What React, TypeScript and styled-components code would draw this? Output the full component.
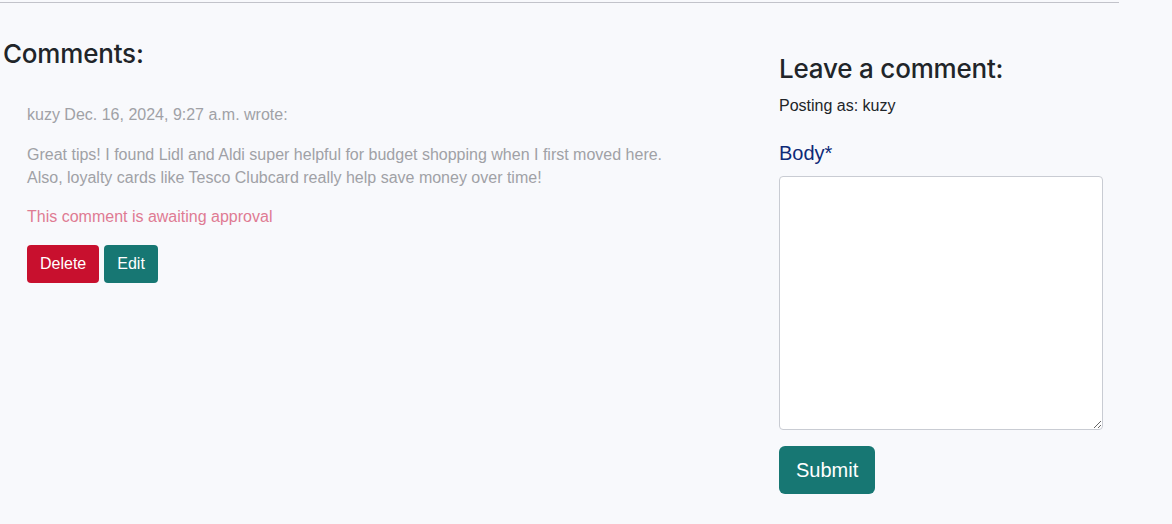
import styled, { createGlobalStyle } from 'styled-components';

const GlobalStyle = createGlobalStyle`
  html, body {
    margin: 0;
    padding: 0;
    background: #f8f9fc;
    font-family: "Liberation Sans", Arial, sans-serif;
    color: #212529;
  }
  * { box-sizing: border-box; }
`;

interface ButtonElementProps {
  $tone: 'danger' | 'teal',
  $large?: boolean
}

interface CommentData {
  author: string,
  created: string,
  body: string[],
  approved: boolean
}

const comments: CommentData[] = [
  {
    author: 'kuzy',
    created: 'Dec. 16, 2024, 9:27 a.m.',
    body: [
      'Great tips! I found Lidl and Aldi super helpful for budget shopping when I first moved here.',
      'Also, loyalty cards like Tesco Clubcard really help save money over time!'
    ],
    approved: false
  }
];

function CommentItem(props: { comment: CommentData }){
  const c = props.comment;
  return (
    <CommentBox>
      <Meta>{c.author} {c.created} wrote:</Meta>
      <CommentBody>
        {c.body.map((line, i) => <div key={i}>{line}</div>)}
      </CommentBody>
      {!c.approved && <Pending>This comment is awaiting approval</Pending>}
      <ButtonRow>
        <Btn $tone="danger">Delete</Btn>
        <Btn $tone="teal">Edit</Btn>
      </ButtonRow>
    </CommentBox>
  );
}

export default function App(){
  return (
    <>
      <GlobalStyle />
      <Page>
        <Rule />
        <Row>
          <CommentsCol>
            <Heading>Comments:</Heading>
            {comments.map((c, i) => <CommentItem key={i} comment={c} />)}
          </CommentsCol>
          <FormCol>
            <FormHeading>Leave a comment:</FormHeading>
            <Posting>Posting as: kuzy</Posting>
            <form onSubmit={e => e.preventDefault()}>
              <Label htmlFor="id_body">Body*</Label>
              <BodyInput id="id_body" name="body" />
              <Btn $tone="teal" $large type="submit">Submit</Btn>
            </form>
          </FormCol>
        </Row>
      </Page>
    </>
  );
}

const Page = styled.div`
  width: 1119px;
  min-height: 524px;
`;
const Rule = styled.hr`
  margin: 2px 0 0;
  border: none;
  border-top: 1px solid #c2c3ca;
`;
const Row = styled.div`
  display: flex;
`;
const CommentsCol = styled.div`
  width: 779px;
  padding-left: 3px;
`;
const FormCol = styled.div`
  flex: 1;
`;
const Heading = styled.h3`
  margin: 34px 0 0;
  font-family: Inter, "Liberation Sans", sans-serif;
  font-size: 26px;
  font-weight: 500;
  letter-spacing: -0.2px;
  line-height: 33.6px;
`;
const FormHeading = styled(Heading)`
  margin: 49px 0 8px;
`;
const CommentBox = styled.div`
  padding: 32px 24px 0;
  font-size: 16px;
  line-height: 24px;
`;
const Meta = styled.p`
  margin: 0 0 16px;
  color: #a0a1a6;
`;
const CommentBody = styled.div`
  color: #a0a1a6;
  line-height: 23px;
  margin-bottom: 16px;
`;
const Pending = styled.p`
  margin: 0 0 16px;
  color: #df7b93;
`;
const ButtonRow = styled.div`
  display: flex;
  gap: 5px;
`;
const Btn = styled.button<ButtonElementProps>`
  font-family: inherit;
  font-size: ${p => p.$large ? '20px' : '16px'};
  line-height: 1.5;
  padding: ${p => p.$large ? '8px 16px' : '6px 12px'};
  border: 1px solid transparent;
  border-radius: ${p => p.$large ? '6px' : '4px'};
  color: #fff;
  background: ${p => p.$tone === 'danger' ? '#c8102e' : '#177773'};
  cursor: pointer;
`;
const Posting = styled.p`
  margin: 0 0 20px;
  font-size: 16px;
  line-height: 24px;
`;
const Label = styled.label`
  display: block;
  margin-bottom: 8px;
  font-size: 20px;
  line-height: 30px;
  color: #0d2a78;
`;
const BodyInput = styled.textarea`
  display: block;
  width: 324px;
  height: 254px;
  margin-bottom: 16px;
  background: #fff;
  border: 1px solid #c9ccd3;
  border-radius: 4px;
  font-family: inherit;
  font-size: 16px;
`;
